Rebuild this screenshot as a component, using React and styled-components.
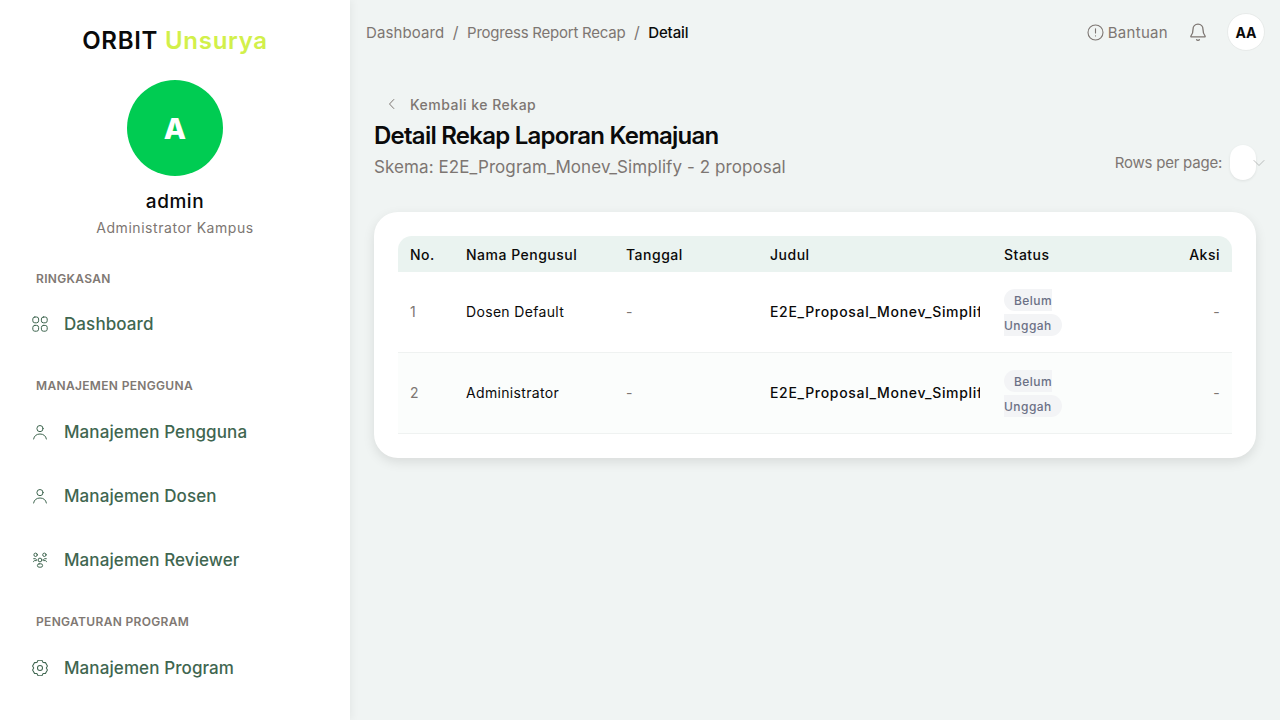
import React from "react";
import styled, { createGlobalStyle } from "styled-components";

const FONT = `Inter, "Liberation Sans", sans-serif`;

const Global = createGlobalStyle`
  html, body { margin: 0; padding: 0; height: 100%; background: #f0f4f3; }
  body { font-family: ${FONT}; overflow: hidden; }
  * { box-sizing: border-box; }
`;

const Shell = styled.div`
  display: flex;
  width: 1280px;
  height: 720px;
  overflow: hidden;
`;

const Sidebar = styled.aside`
  width: 350px;
  flex: none;
  height: 720px;
  background: #fff;
  box-shadow: 2px 0 8px rgba(0, 0, 0, 0.05);
  overflow: hidden;
  position: relative;
  z-index: 1;
`;

const Brand = styled.div`
  height: 80px;
  padding-top: 25px;
  text-align: center;
  font-size: 24px;
  line-height: 32px;
  font-weight: 600;
  letter-spacing: 0.72px;
  color: #0a0a0a;
  span { color: #d2f04a; }
`;

const Profile = styled.div`
  display: flex;
  flex-direction: column;
  align-items: center;
`;

const Avatar = styled.div`
  width: 96px;
  height: 96px;
  border-radius: 50%;
  background: #00cc52;
  color: #fff;
  font-size: 29px;
  font-weight: 800;
  display: flex;
  align-items: center;
  justify-content: center;
`;

const ProfileName = styled.div`
  margin-top: 14px;
  font-size: 19px;
  line-height: 24px;
  font-weight: 500;
  letter-spacing: 0.55px;
  color: #0a0a0a;
`;

const ProfileRole = styled.div`
  margin-top: 3px;
  font-size: 14px;
  line-height: 22px;
  color: #7d7672;
  letter-spacing: 0.55px;
`;

const Nav = styled.nav`
  padding-top: 31px;
`;

const SectionLabel = styled.div`
  height: 18px;
  padding-left: 36px;
  font-size: 12px;
  line-height: 18px;
  font-weight: 600;
  letter-spacing: 0.33px;
  color: #807873;
  text-transform: uppercase;
  margin-top: ${(p) => p.$top || 0}px;
  margin-bottom: ${(p) => p.$bottom}px;
`;

const NavItem = styled.div`
  height: 64px;
  padding-left: 32px;
  display: flex;
  align-items: center;
  gap: 16px;
  color: #3f6650;
  font-size: 17px;
  font-weight: 500;
  letter-spacing: 0.1px;
  svg { flex: none; }
`;

const Main = styled.main`
  flex: 1;
  min-width: 0;
  display: flex;
  flex-direction: column;
`;

const Topbar = styled.header`
  height: 64px;
  flex: none;
  padding: 0 15px 0 16px;
  display: flex;
  align-items: center;
  justify-content: space-between;
`;

const Crumbs = styled.div`
  display: flex;
  align-items: center;
  font-size: 15px;
  color: #7d7672;
`;

const Crumb = styled.span`
  letter-spacing: ${(p) => p.$spacing}px;
`;

const CrumbSep = styled.span`
  margin: 0 8.5px;
  font-size: 16px;
`;

const CrumbNow = styled.span`
  color: #0a0a0a;
  font-weight: 500;
  letter-spacing: -0.13px;
`;

const TopActions = styled.div`
  display: flex;
  align-items: center;
`;

const HelpLink = styled.div`
  display: flex;
  align-items: center;
  gap: 4px;
  font-size: 15px;
  letter-spacing: 0.3px;
  color: #7d7672;
`;

const BellWrap = styled.div`
  margin: 0 20px 0 21px;
  display: flex;
  color: #7d7672;
`;

const UserChip = styled.div`
  width: 38px;
  height: 38px;
  border-radius: 50%;
  background: #fff;
  border: 1px solid #e8ebea;
  display: flex;
  align-items: center;
  justify-content: center;
  font-size: 14px;
  font-weight: 700;
  color: #0a0a0a;
`;

const Content = styled.div`
  padding: 28px 24px 0;
`;

const HeadRow = styled.div`
  display: flex;
  justify-content: space-between;
  align-items: flex-end;
`;

const BackLink = styled.div`
  height: 24px;
  padding-left: 12px;
  display: flex;
  align-items: center;
  gap: 12px;
  font-size: 14px;
  font-weight: 500;
  letter-spacing: 0.5px;
  color: #7d7672;
`;

const Title = styled.h1`
  margin: 4px 0 0;
  font-size: 24px;
  line-height: 32px;
  font-weight: 600;
  letter-spacing: -0.75px;
  color: #0a0a0a;
`;

const Subtitle = styled.p`
  margin: 2px 0 0;
  font-size: 17px;
  line-height: 26px;
  color: #7d7672;
  letter-spacing: 0.085px;
`;

const RowsControl = styled.div`
  display: flex;
  align-items: center;
  gap: 8px;
  position: relative;
  left: 11px;
  font-size: 15px;
  letter-spacing: -0.23px;
  color: #7d7672;
`;

const SelectWrap = styled.div`
  display: flex;
  align-items: center;
  position: relative;
  width: 37px;
  height: 35px;
`;

const SelectBox = styled.div`
  width: 26px;
  height: 35px;
  border-radius: 13px;
  background: #fff;
  box-shadow: 0 1px 3px rgba(0, 0, 0, 0.08);
`;

const SelectChevron = styled.span`
  position: absolute;
  right: 2px;
  top: 14px;
  display: flex;
`;

const Card = styled.section`
  margin-top: 32px;
  background: #fff;
  border-radius: 24px;
  padding: 24px;
  box-shadow: 0 4px 12px rgba(0, 0, 0, 0.1);
`;

const Table = styled.table`
  width: 834px;
  table-layout: fixed;
  border-collapse: separate;
  border-spacing: 0;
`;

const HeadCell = styled.th`
  width: ${(p) => p.$w}px;
  height: 36px;
  padding: 0 12px;
  background: #eaf3f0;
  font-size: 14px;
  font-weight: 500;
  letter-spacing: 0.5px;
  color: #0a0a0a;
  text-align: ${(p) => p.$align || "left"};
  &:first-child { border-top-left-radius: 14px; }
  &:last-child { border-top-right-radius: 14px; }
`;

const Row = styled.tr`
  background: ${(p) => (p.$alt ? "#fbfdfc" : "#fff")};
`;

const Cell = styled.td`
  height: 81px;
  padding: 0 12px 1px;
  border-bottom: 1px solid #eff2f1;
  font-size: 14px;
  letter-spacing: ${(p) => p.$spacing ?? 0.33}px;
  color: ${(p) => p.$color || "#0a0a0a"};
  text-align: ${(p) => p.$align || "left"};
  font-weight: ${(p) => p.$weight || 400};
`;

const Truncate = styled.div`
  overflow: hidden;
  white-space: nowrap;
`;

const BadgeBox = styled.div`
  width: 66px;
  margin-top: 2px;
  line-height: 24px;
`;

const Badge = styled.span`
  background: #f3f4f6;
  color: #6b7085;
  font-size: 12px;
  font-weight: 500;
  letter-spacing: 0.45px;
  padding: 3.5px 10px;
  border-radius: 12px;
`;

const stroke = {
  fill: "none",
  stroke: "currentColor",
  strokeLinecap: "round",
  strokeLinejoin: "round",
};

const GridIcon = () => (
  <svg width="16" height="16" viewBox="0 0 16 16" {...stroke} strokeWidth="1">
    <rect x="0.8" y="1" width="5.8" height="5.8" rx="2" />
    <rect x="9.4" y="1" width="5.8" height="5.8" rx="2" />
    <rect x="0.8" y="9.4" width="5.8" height="5.8" rx="2" />
    <rect x="9.4" y="9.4" width="5.8" height="5.8" rx="2" />
  </svg>
);

const PersonIcon = () => (
  <svg width="16" height="16" viewBox="0 0 16 16" {...stroke} strokeWidth="1">
    <circle cx="8" cy="4.6" r="3.1" />
    <path d="M1.6 15c.5-3.2 3-5 6.4-5s5.900 1.800 6.400 5" />
  </svg>
);

const GroupIcon = () => (
  <svg width="16" height="16" viewBox="0 0 16 16" {...stroke} strokeWidth="1">
    <circle cx="3.600" cy="2.800" r="1.700" />
    <circle cx="12.400" cy="2.800" r="1.700" />
    <circle cx="8" cy="8" r="1.900" />
    <path d="M1.700 6.700h1.400c.8 0 1.400.5 1.500 1.200M1.500 9.700c.1-.7.600-1.100 1.200-1.100h1.600" />
    <path d="M14.300 6.700h-1.400c-.8 0-1.400.5-1.500 1.200M14.500 9.700c-.1-.7-.6-1.100-1.200-1.100h-1.600" />
    <rect x="5.400" y="11.800" width="5.200" height="3.400" rx="1.700" />
  </svg>
);

const GearIcon = () => (
  <svg width="16" height="16" viewBox="1 1 14 14" {...stroke} strokeWidth="0.9">
    <circle cx="8" cy="8" r="2.200" />
    <path d="M6.300 1.300h3.400l1 1.800 2.100.2 1.700 2.900-1 1.800 1 1.800-1.700 2.900-2.100.2-1 1.800H6.300l-1-1.800-2.100-.2-1.700-2.900 1-1.800-1-1.800 1.700-2.900 2.100-.2z" />
  </svg>
);

const InfoIcon = () => (
  <svg width="17" height="17" viewBox="0 0 17 17" {...stroke} strokeWidth="1.100">
    <circle cx="8.500" cy="8.500" r="7.500" />
    <path d="M8.500 4.800v4.200M8.500 11.800v.1" />
  </svg>
);

const BellIcon = () => (
  <svg width="18" height="19" viewBox="0 0 18 19" {...stroke} strokeWidth="1.300">
    <path d="M9 1.200c-3 0-5 2.200-5 5.200 0 3.600-.7 5-2 6.500-.4.500-.1 1 .5 1h13c.6 0 .9-.5.500-1-1.300-1.500-2-2.900-2-6.500 0-3-2-5.200-5-5.200z" />
    <path d="M7.600 16.800c.7.700 2.100.7 2.800 0" />
  </svg>
);

const BackIcon = () => (
  <svg width="12" height="12" viewBox="0 0 12 12" {...stroke} strokeWidth="1">
    <path d="M7.800 1.500 3.500 6l4.300 4.500" />
  </svg>
);

const ChevronIcon = () => (
  <svg width="12" height="8" viewBox="0 0 12 8" {...stroke} strokeWidth="0.8" color="#a9adac">
    <path d="M1 1.500 6 6.500l5-5" />
  </svg>
);

const rows = [
  { no: 1, name: "Dosen Default" },
  { no: 2, name: "Administrator", alt: true },
];

export default function App() {
  return (
    <Shell>
      <Global />
      <Sidebar>
        <Brand>
          ORBIT <span>Unsurya</span>
        </Brand>
        <Profile>
          <Avatar>A</Avatar>
          <ProfileName>admin</ProfileName>
          <ProfileRole>Administrator Kampus</ProfileRole>
        </Profile>
        <Nav>
          <SectionLabel $bottom={4}>Ringkasan</SectionLabel>
          <NavItem><GridIcon />Dashboard</NavItem>
          <SectionLabel $top={21} $bottom={5}>Manajemen Pengguna</SectionLabel>
          <NavItem><PersonIcon />Manajemen Pengguna</NavItem>
          <NavItem><PersonIcon />Manajemen Dosen</NavItem>
          <NavItem><GroupIcon />Manajemen Reviewer</NavItem>
          <SectionLabel $top={21} $bottom={5}>Pengaturan Program</SectionLabel>
          <NavItem><GearIcon />Manajemen Program</NavItem>
        </Nav>
      </Sidebar>
      <Main>
        <Topbar>
          <Crumbs>
            <Crumb $spacing={0.1}>Dashboard</Crumb>
            <CrumbSep>/</CrumbSep>
            <Crumb $spacing={-0.23}>Progress Report Recap</Crumb>
            <CrumbSep>/</CrumbSep>
            <CrumbNow>Detail</CrumbNow>
          </Crumbs>
          <TopActions>
            <HelpLink><InfoIcon />Bantuan</HelpLink>
            <BellWrap><BellIcon /></BellWrap>
            <UserChip>AA</UserChip>
          </TopActions>
        </Topbar>
        <Content>
          <HeadRow>
            <div>
              <BackLink><BackIcon />Kembali ke Rekap</BackLink>
              <Title>Detail Rekap Laporan Kemajuan</Title>
              <Subtitle>Skema: E2E_Program_Monev_Simplify - 2 proposal</Subtitle>
            </div>
            <RowsControl>
              Rows per page:
              <SelectWrap>
                <SelectBox />
                <SelectChevron><ChevronIcon /></SelectChevron>
              </SelectWrap>
            </RowsControl>
          </HeadRow>
          <Card>
            <Table>
              <thead>
                <tr>
                  <HeadCell $w={56}>No.</HeadCell>
                  <HeadCell $w={160}>Nama Pengusul</HeadCell>
                  <HeadCell $w={144}>Tanggal</HeadCell>
                  <HeadCell $w={234}>Judul</HeadCell>
                  <HeadCell $w={120}>Status</HeadCell>
                  <HeadCell $w={120} $align="right">Aksi</HeadCell>
                </tr>
              </thead>
              <tbody>
                {rows.map((r) => (
                  <Row key={r.no} $alt={r.alt}>
                    <Cell $color="#7d7672">{r.no}</Cell>
                    <Cell>{r.name}</Cell>
                    <Cell $color="#7d7672">-</Cell>
                    <Cell $weight={500} $spacing={0.68}><Truncate>E2E_Proposal_Monev_Simplify</Truncate></Cell>
                    <Cell>
                      <BadgeBox><Badge>Belum Unggah</Badge></BadgeBox>
                    </Cell>
                    <Cell $color="#7d7672" $align="right">-</Cell>
                  </Row>
                ))}
              </tbody>
            </Table>
          </Card>
        </Content>
      </Main>
    </Shell>
  );
}
